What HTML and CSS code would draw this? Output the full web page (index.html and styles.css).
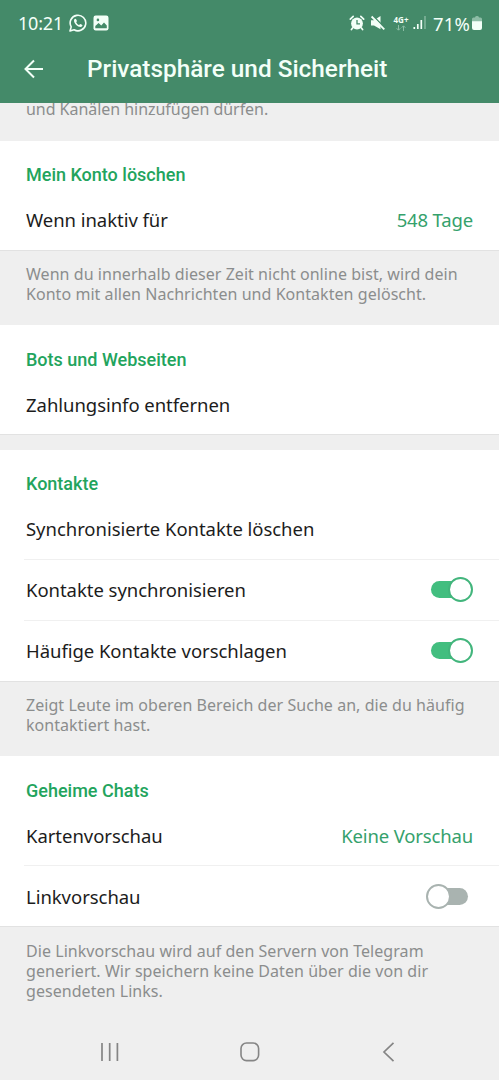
FILE: index.html
```html
<!DOCTYPE html>
<html lang="de">
<head>
    <meta charset="UTF-8">
    <title>Privatsphäre und Sicherheit</title>
    <link rel="stylesheet" href="styles.css">
</head>
<body>
<header>
    <div class="status">
        <span class="time">10:21</span>
        <svg class="whatsapp" width="18" height="18" viewBox="0 0 18 18"><path d="M1 17l1.2-4.1A7.8 7.8 0 1 1 5.1 15.8z" fill="none" stroke="#f3fff8" stroke-width="1.6" stroke-linejoin="round"/><path d="M6.2 4.7c-.4 0-1.300.8-1.200 2 .3 3 3.500 6.200 6.500 6.300 1.100 0 2-.9 2-1.700 0-.4-1.800-1.300-2.200-1.300-.4 0-.8 1-1.200 1-1.100-.3-2.600-1.800-2.900-2.800 0-.4.8-.8.7-1.300 0-.4-.7-2.200-1.700-2.200z" fill="#f3fff8"/></svg>
        <svg class="photo" width="16" height="16" viewBox="0 0 16 16"><rect x=".5" y=".5" width="15" height="15" rx="2.200" fill="#f3fff8"/><circle cx="4.900" cy="4.900" r="1.300" fill="#448a69"/><path d="M2.300 13.200V11l3.300-3 2.700 2.400L11 7.400l2.800 3v2.800z" fill="#448a69"/></svg>
        <div class="status-right">
            <svg width="16" height="16" viewBox="0 0 16 16"><circle cx="8" cy="8.500" r="5.900" fill="#f3fff8"/><path d="M1.300 4.200L4.200 1.400M14.700 4.200L11.800 1.400M3.600 13l-1.200 1.500M12.400 13l1.200 1.500" stroke="#f3fff8" stroke-width="1.700" stroke-linecap="round"/><path d="M8 5v3.800h3" fill="none" stroke="#448a69" stroke-width="1.300"/></svg>
            <svg class="mute" width="16" height="16" viewBox="0 0 16 16"><path d="M1 5.200h3L10.500 1v13.200L4 10.500H1z" fill="#f3fff8"/><path d="M2.700.5l12.500 12.700" stroke="#448a69" stroke-width="1.500"/><path d="M1.600 1.500l12.700 12.900" stroke="#f3fff8" stroke-width="1.800"/></svg>
            <span class="network">4G+<svg width="10" height="6" viewBox="0 0 10 6"><path d="M2.500 0v5M.7 3.300l1.800 1.900 1.800-1.900M7.500 6V1M5.700 2.700L7.500.8l1.800 1.900" fill="none" stroke="#8dbda6"/></svg></span>
            <svg class="signal" width="14" height="16" viewBox="0 0 14 16"><path d="M1.300 12v2M4.800 9v5M8.300 5v9" stroke="#f3fff8" stroke-width="1.700"/><path d="M12 1v13" stroke="#7db198" stroke-width="1.700"/></svg>
            <span class="percent">71%</span>
            <svg class="battery" width="10" height="14" viewBox="0 0 10 14"><path d="M0 6V3q0-1.500 1.500-1.500H3Q3 0 4.500 0h1Q7 0 7 1.500h1.500Q10 1.500 10 3v3z" fill="#8dbda6"/><path d="M0 5.300h10V12q0 2-2 2H2q-2 0-2-2z" fill="#f3fff8"/></svg>
        </div>
    </div>
    <div class="titlebar">
        <svg width="20" height="20" viewBox="0 0 20 20"><path d="M19 10H1.500M10 1.500L1.500 10l8.500 8.500" fill="none" stroke="#f3fff8" stroke-width="2"/></svg>
        <h1>Privatsphäre und Sicherheit</h1>
    </div>
</header>
<main>
    <p class="info first">und Kanälen hinzufügen dürfen.</p>

    <section class="account">
        <h2>Mein Konto löschen</h2>
        <div class="row">Wenn inaktiv für<span class="value">548 Tage</span></div>
    </section>
    <p class="info">Wenn du innerhalb dieser Zeit nicht online bist, wird dein<br>Konto mit allen Nachrichten und Kontakten gelöscht.</p>

    <section class="bots">
        <h2>Bots und Webseiten</h2>
        <div class="row">Zahlungsinfo entfernen</div>
    </section>
    <div class="gap"></div>

    <section class="contacts">
        <h2>Kontakte</h2>
        <div class="row">Synchronisierte Kontakte löschen</div>
        <div class="row">Kontakte synchronisieren<span class="switch on"></span></div>
        <div class="row">Häufige Kontakte vorschlagen<span class="switch on"></span></div>
    </section>
    <p class="info">Zeigt Leute im oberen Bereich der Suche an, die du häufig<br>kontaktiert hast.</p>

    <section class="secret">
        <h2>Geheime Chats</h2>
        <div class="row">Kartenvorschau<span class="value">Keine Vorschau</span></div>
        <div class="row">Linkvorschau<span class="switch"></span></div>
    </section>
    <p class="info last">Die Linkvorschau wird auf den Servern von Telegram<br>generiert. Wir speichern keine Daten über die von dir<br>gesendeten Links.</p>
</main>
<nav>
    <svg width="20" height="20" viewBox="0 0 20 20"><path d="M2 1v18M9.700 1v18M17.400 1v18" stroke="#858585" stroke-width="1.700"/></svg>
    <svg width="20" height="20" viewBox="0 0 20 20"><rect x="1" y="1" width="17.600" height="17.600" rx="5.500" fill="none" stroke="#858585" stroke-width="1.600"/></svg>
    <svg width="20" height="20" viewBox="0 0 20 20"><path d="M14.500 .8L5 10l9.500 9.200" fill="none" stroke="#858585" stroke-width="1.700"/></svg>
</nav>
</body>
</html>
```

FILE: styles.css
```css
*,*:after{box-sizing:border-box;}
body{margin:0; width:499px; height:1080px; overflow:hidden; display:flex; flex-direction:column; background:#efefef; font-family:"Noto Sans",sans-serif; color:#1c1c1c;}
svg{display:block; flex:none;}
h1,h2,p{margin:0;}

header{height:103px; flex:none; background:#448a69; color:#f3fff8;}
.status{height:46px; padding:0 17px 0 18px; display:flex; align-items:center; font-size:18px;}
.time{width:45px; letter-spacing:-.2px;}
.whatsapp{margin-left:6px;}
.photo{margin-left:6px;}
.status-right{margin-left:auto; display:flex; align-items:center;}
.mute{margin-left:5px;}
.network{margin-left:7px; width:16px; font-size:8px; line-height:8px; font-weight:700; display:flex; flex-direction:column; align-items:center; gap:1px;}
.signal{margin-left:4px;}
.percent{margin-left:6px; width:36px; font-size:18.500px; letter-spacing:.2px;}
.battery{margin-left:3px;}
.titlebar{height:46px; padding-left:24px; display:flex; align-items:center;}
h1{margin-left:43px; font:500 24.350px/46px Roboto,sans-serif; white-space:nowrap;}

main{flex:1;}
section{background:#fff; border-bottom:1px solid #e2e2e2;}
h2{height:49px; padding:17px 26px 0; font:500 18px/34px Roboto,sans-serif; color:#22a45d;}
.bots h2,.secret h2{padding-top:18px;}
.row{height:60px; margin-left:24px; padding:0 26px 0 2px; display:flex; align-items:center; font-size:18.500px; letter-spacing:-.04px; white-space:nowrap;}
.row + .row{height:61px; border-top:1px solid #f0f0f0;}
.account .row,.contacts .row{padding-bottom:2px;}
.value{margin-left:auto; color:#35a16c; letter-spacing:-.15px;}
.info{height:74px; padding:13px 26px 0; font-size:16px; line-height:20px; letter-spacing:.05px; color:#8b8d8d; white-space:nowrap;}
.info.first{height:38px; padding-top:0; line-height:13px; letter-spacing:-.04px;}
.info.last{height:auto; padding-top:14px;}
.gap{height:15px;}

.switch{position:relative; margin-left:auto; margin-right:5px; width:38px; height:17px; border-radius:9px; background:#a9b3b0;}
.switch:after{content:""; position:absolute; left:-4px; top:-4px; width:25px; height:25px; border:2px solid #a9b3b0; border-radius:50%; background:#fff;}
.switch.on{margin-right:4px; background:#42be7f;}
.switch.on:after{left:auto; right:-4px; border-color:#42b57c;}
.contacts .switch{margin-top:1px;}

nav{height:57px; flex:none; display:flex; justify-content:space-between; padding:19px 100px 0;}
```
